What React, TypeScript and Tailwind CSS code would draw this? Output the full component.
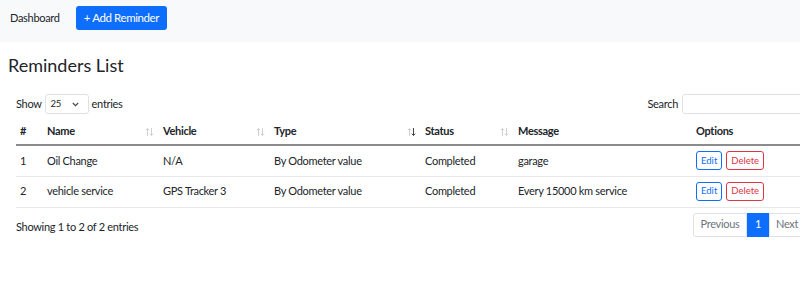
import React from 'react';

type Reminder = {
  id: number;
  name: string;
  vehicle: string;
  type: string;
  status: string;
  message: string;
};

const reminders: Reminder[] = [
  { id: 1, name: 'Oil Change', vehicle: 'N/A', type: 'By Odometer value', status: 'Completed', message: 'garage' },
  { id: 2, name: 'vehicle service', vehicle: 'GPS Tracker 3', type: 'By Odometer value', status: 'Completed', message: 'Every 15000 km service' },
];

// DataTables style sort arrows
const SortIcon: React.FC<{ active?: boolean }> = ({ active }) => (
  <svg
    className="absolute right-[5px] top-1/2 -translate-y-1/2"
    width="9"
    height="9"
    viewBox="0 0 9 9"
    fill="none"
    strokeWidth="1"
  >
    <path d="M2.5 8.5V1M0.8 2.8L2.5 1l1.7 1.8" stroke="#d0d0d0" />
    <path d="M6.5 0.5V8M4.8 6.2L6.5 8l1.7-1.8" stroke={active ? '#444' : '#d0d0d0'} />
  </svg>
);

export default function App() {
  return (
    <div
      className="w-[800px] h-[283px] overflow-hidden bg-white text-[#212529] text-[11px] tracking-[-0.3px]"
      style={{ fontFamily: '"Segoe UI", Lato, "Liberation Sans", sans-serif' }}
    >
      <nav className="h-[42px] bg-[#f8f9fa] flex items-start pt-[6px] pl-[10px]">
        <span className="h-[24px] flex items-center text-[11px] mr-[16px]">Dashboard</span>
        <button className="h-[24px] px-[8px] bg-[#0d6efd] text-white rounded-[3px] text-[11.5px] tracking-[-0.4px]">
          + Add Reminder
        </button>
      </nav>

      <div className="w-[840px] px-[8px]">
        <h3 className="text-[18px] tracking-normal leading-none mt-[14px] mb-[20px]">Reminders List</h3>

        <div className="pl-[8px]">
          <div className="flex items-center justify-between h-[20px]">
            <div className="flex items-center">
              <span>Show</span>
              <span className="ml-[3px] mr-[3px] w-[44px] h-[20px] border border-[#dee2e6] rounded-[3px] flex items-center justify-between pl-[5px] pr-[9px] text-[9.5px]">
                25
                <svg width="7" height="5" viewBox="0 0 7 5" fill="none" stroke="#444" strokeWidth="1.1">
                  <path d="M0.8 1l2.7 2.7L6.2 1" />
                </svg>
              </span>
              <span>entries</span>
            </div>
            <div className="flex items-center">
              <span className="mr-[4px]">Search</span>
              <span className="w-[150px] h-[20px] border border-[#dee2e6] rounded-[3px]" />
            </div>
          </div>

          <table className="w-[824px] mt-[5px] border-collapse text-left">
            <thead>
              <tr className="h-[26px] border-b-2 border-[#8a8c8e] font-bold">
                <th className="w-[27px] pl-[4px]">#</th>
                <th className="w-[116px] pl-[4px] relative">Name<SortIcon /></th>
                <th className="w-[111px] pl-[4px] relative">Vehicle<SortIcon /></th>
                <th className="w-[151px] pl-[4px] relative">Type<SortIcon active /></th>
                <th className="w-[93px] pl-[4px] relative">Status<SortIcon /></th>
                <th className="w-[178px] pl-[4px]">Message</th>
                <th className="pl-[4px]">Options</th>
              </tr>
            </thead>
            <tbody>
              {reminders.map((r) => (
                <tr key={r.id} className="h-[31px] border-b border-[#e6e8ea]">
                  <td className="pl-[4px]">{r.id}</td>
                  <td className="pl-[4px]">{r.name}</td>
                  <td className="pl-[4px]">{r.vehicle}</td>
                  <td className="pl-[4px]">{r.type}</td>
                  <td className="pl-[4px]">{r.status}</td>
                  <td className="pl-[4px]">{r.message}</td>
                  <td className="pl-[4px]">
                    <div className="flex gap-[4px]">
                      <button className="h-[19px] px-[4px] border border-[#0d6efd] text-[#0d6efd] rounded-[3px] text-[9.5px] tracking-normal">
                        Edit
                      </button>
                      <button className="h-[19px] px-[4px] border border-[#dc3545] text-[#dc3545] rounded-[3px] text-[9.5px] tracking-normal">
                        Delete
                      </button>
                    </div>
                  </td>
                </tr>
              ))}
            </tbody>
          </table>

          <div className="flex items-center mt-[5px] h-[24px] w-[824px]">
            <span className="mt-[5px]">Showing 1 to 2 of 2 entries</span>
            <div className="flex h-[24px] ml-auto mr-[35px]">
              <span className="w-[54px] border border-[#dee2e6] rounded-l-[3px] flex items-center justify-center text-[#6c757d]">
                Previous
              </span>
              <span className="w-[22px] bg-[#0d6efd] text-white flex items-center justify-center">1</span>
              <span className="w-[36px] border border-[#dee2e6] rounded-r-[3px] flex items-center pl-[6px] text-[#6c757d]">
                Next
              </span>
            </div>
          </div>
        </div>
      </div>
    </div>
  );
}
